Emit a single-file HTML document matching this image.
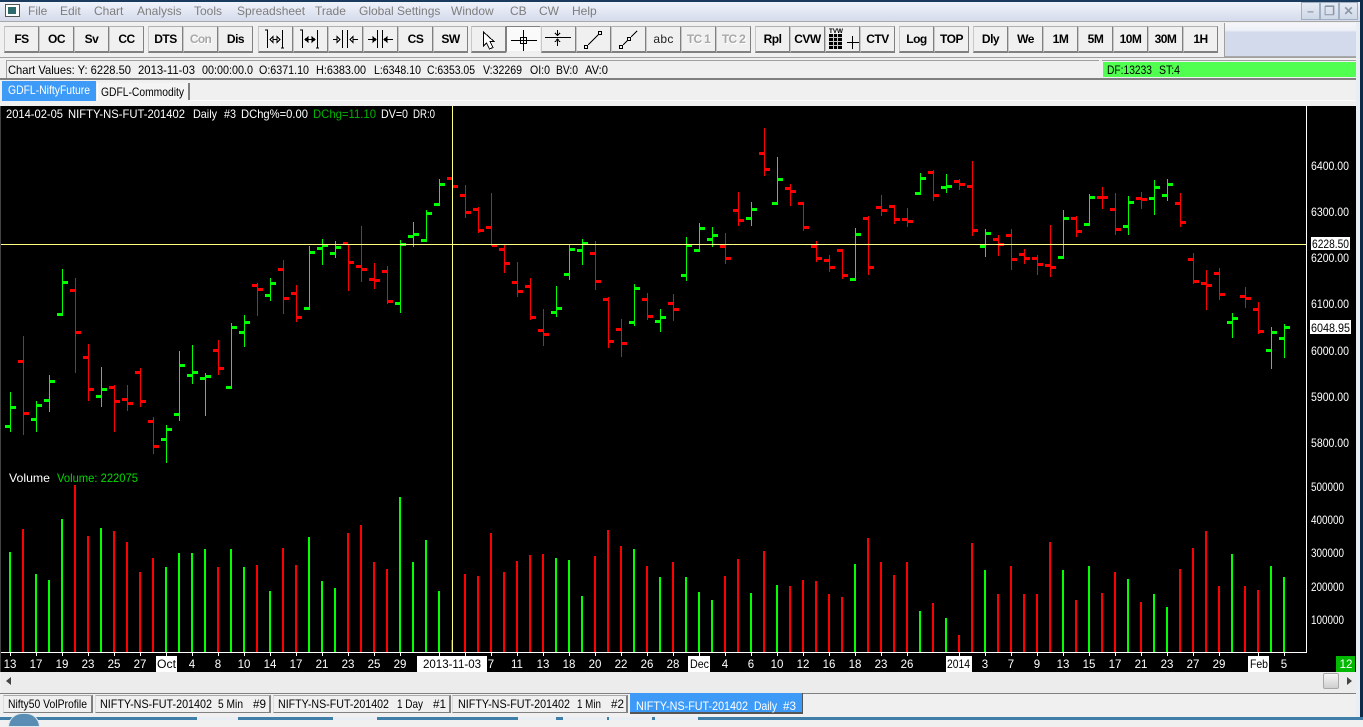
<!DOCTYPE html>
<html><head><meta charset="utf-8"><style>
html,body{margin:0;padding:0;width:1363px;height:720px;overflow:hidden;background:#f0f0f0;font-family:"Liberation Sans",sans-serif;font-size:12px;color:#000}
.a{position:absolute}
.menu{position:absolute;left:0;top:2px;width:1363px;height:19px;background:linear-gradient(#f0f3fa,#d5dbec)}
.menu span{position:absolute;top:2px;color:#7d7d7d;font-size:12px;white-space:pre}
.b{position:absolute;top:26px;width:33px;height:24px;background:#f0f0f0;border-top:1px solid #b0b0b0;border-left:1px solid #c8c8c8;border-right:1px solid #808080;border-bottom:2px solid #808080;text-align:center;font-weight:bold;font-size:12px;line-height:24px;letter-spacing:-.5px}
.d{color:#a8a8a8;text-shadow:1px 1px 0 #fff;letter-spacing:-.7px}
.t{position:absolute;top:695px;height:16px;background:#f0f0f0;border-top:1px solid #aaa;border-left:1px solid #ddd;border-right:2px solid #808080;border-bottom:1px solid #808080}
.wc{position:absolute;top:2px;height:16px;width:17px;border:1px solid #9fb0c4;background:linear-gradient(#e6ebf4,#cfd8e8);color:#8a97a8;text-align:center;font-size:12px;line-height:16px;font-weight:bold}
text{font-family:"Liberation Sans",sans-serif;font-size:12px;white-space:pre}
</style></head><body>
<div class="a" style="left:0;top:0;width:1363px;height:2px;background:#1a3b5e"></div>
<div class="menu">
<span style="left:28px">File</span><span style="left:60px">Edit</span><span style="left:94px">Chart</span><span style="left:137px">Analysis</span><span style="left:194px">Tools</span><span style="left:237px">Spreadsheet</span><span style="left:315px">Trade</span><span style="left:359px">Global Settings</span><span style="left:451px">Window</span><span style="left:510px">CB</span><span style="left:539px">CW</span><span style="left:572px">Help</span>
</div>
<div class="a" style="left:5px;top:4px;width:13px;height:11px;background:#fff;border:1px solid #555"><div style="width:8px;height:7px;margin:2px;background:#2c6a6e"></div></div>
<div class="wc" style="left:1301px">&#8211;</div><div class="wc" style="left:1320px">&#10064;</div><div class="wc" style="left:1339px">&#10005;</div>
<div class="a" style="left:0;top:21px;width:1363px;height:1px;background:#a8a8a8"></div>

<div class="b" style="left:4px">FS</div><div class="b" style="left:39px">OC</div><div class="b" style="left:74px">Sv</div><div class="b" style="left:109px">CC</div>
<div class="b" style="left:148px">DTS</div><div class="b d" style="left:183px">Con</div><div class="b" style="left:218px">Dis</div>
<div class="b" style="left:258px"></div><div class="b" style="left:293px"></div><div class="b" style="left:328px"></div><div class="b" style="left:363px"></div>
<div class="b" style="left:398px">CS</div><div class="b" style="left:433px">SW</div>
<div class="b" style="left:471px"></div><div class="b" style="left:506px;background:#fafafa;border-top-color:#808080;border-left-color:#808080;border-right-color:#eee;border-bottom-color:#eee"></div><div class="b" style="left:541px"></div><div class="b" style="left:576px"></div><div class="b" style="left:611px"></div>
<div class="b" style="left:646px;font-weight:normal;color:#222;font-size:12px;letter-spacing:.3px">abc</div><div class="b d" style="left:681px">TC 1</div><div class="b d" style="left:716px">TC 2</div>
<div class="b" style="left:755px">Rpl</div><div class="b" style="left:790px">CVW</div><div class="b" style="left:825px"></div><div class="b" style="left:860px">CTV</div>
<div class="b" style="left:899px">Log</div><div class="b" style="left:934px">TOP</div>
<div class="b" style="left:973px">Dly</div><div class="b" style="left:1008px">We</div><div class="b" style="left:1043px">1M</div><div class="b" style="left:1078px">5M</div><div class="b" style="left:1113px">10M</div><div class="b" style="left:1148px">30M</div><div class="b" style="left:1183px">1H</div>

<div class="a" style="left:1224px;top:23px;width:1px;height:34px;background:#a0a0a0"></div>
<div class="a" style="left:1225px;top:23px;width:133px;height:33px;background:linear-gradient(#f4f6fb 0,#eef0f7 22%,#d3daec 28%,#d3daec 100%);border-bottom:1px solid #a8a8a8"></div>
<div class="a" style="left:0;top:57px;width:1357px;height:1px;background:#a0a0a0"></div>

<div class="a" style="left:6px;top:60px;width:1093px;height:1px;background:#a0a0a0"></div>
<div class="a" style="left:6px;top:60px;width:1px;height:18px;background:#a0a0a0"></div>
<div class="a" style="left:1103px;top:62px;width:254px;height:15px;background:#50ff50"></div>
<div class="a" style="left:1102px;top:60px;width:255px;height:1px;background:#a0a0a0"></div>
<div class="a" style="left:0;top:78px;width:1356px;height:2px;background:#808080"></div>

<div class="a" style="left:2px;top:81px;width:94px;height:20px;background:#3d9bf7"></div>
<div class="a" style="left:97px;top:83px;width:90px;height:17px;background:#f4f4f4;border-left:1px solid #fff;border-right:2px solid #808080"></div>
<div class="a" style="left:190px;top:100px;width:1166px;height:1px;background:#fbfbfb"></div>

<div class="a" style="left:1px;top:106px;width:1355px;height:566px;background:#000"></div>
<div class="a" style="left:0;top:106px;width:1px;height:566px;background:#444"></div>
<div class="a" style="left:1356px;top:22px;width:4px;height:695px;background:#e8eef4"></div>
<div class="a" style="left:1360px;top:0;width:3px;height:720px;background:#0d2a48"></div>

<svg class="a" style="left:0;top:0" width="1363" height="720" shape-rendering="crispEdges">
<path fill="none" stroke="#0f0" stroke-width="2" d="M10 552V652M36 574V652M49 580V652M62 519V652M101 528V652M166 567V652M179 553V652M192 553V652M205 549V652M231 549V652M244 567V652M270 591V652M309 537V652M322 581V652M335 588V652M400 497V652M413 562V652M426 540V652M439 591V652M556 558V652M569 560V652M582 596V652M634 549V652M660 577V652M686 577V652M699 592V652M712 600V652M751 593V652M777 585V652M855 564V652M920 611V652M946 618V652M985 570V652M1063 570V652M1089 566V652M1128 579V652M1154 594V652M1167 607V652M1232 554V652M1271 566V652M1284 577V652"/>
<path fill="none" stroke="#f00" stroke-width="2" d="M23 529V652M75 485V652M88 536V652M114 531V652M127 542V652M140 572V652M153 558V652M218 567V652M257 565V652M283 548V652M296 565V652M348 533V652M361 525V652M374 562V652M387 569V652M452 640V652M465 574V652M478 576V652M491 533V652M504 572V652M517 561V652M530 555V652M543 554V652M595 556V652M608 530V652M621 546V652M647 566V652M673 562V652M725 576V652M738 559V652M764 551V652M790 586V652M803 580V652M816 581V652M829 594V652M842 597V652M868 538V652M881 562V652M894 575V652M907 562V652M933 603V652M959 635V652M972 543V652M998 594V652M1011 566V652M1024 594V652M1037 594V652M1050 542V652M1076 600V652M1102 593V652M1115 572V652M1141 602V652M1180 569V652M1193 548V652M1206 531V652M1219 586V652M1245 586V652M1258 590V652"/>
<path fill="none" stroke="#0f0" stroke-width="1" d="M10.5 392V432M36.5 401V432M49.5 375V412M62.5 269V316M101.5 367V407M166.5 425V463M179.5 351V421M192.5 345V384M205.5 373V416M231.5 323V389M244.5 315V347M270.5 278V301M309.5 246V310M322.5 239V265M335.5 241V258M400.5 240V313M413.5 222V247M426.5 210V242M439.5 179V206M556.5 286V317M569.5 244V280M582.5 239V265M634.5 284V326M660.5 309V332M686.5 237V281M699.5 223V252M712.5 227V247M751.5 202V226M777.5 157V205M855.5 228V281M920.5 173V195M946.5 174V193M985.5 229V257M1063.5 210V259M1089.5 194V226M1128.5 196V235M1154.5 180V215M1167.5 179V201M1232.5 313V338M1271.5 327V369M1284.5 324V358"/>
<path fill="none" stroke="#0f0" stroke-width="3" d="M5 426.5h5M11 407.5h5M31 419.5h5M37 405.5h5M44 400.5h5M50 381.5h5M57 314.5h5M63 282.5h5M96 396.5h5M102 389.5h5M161 439.5h5M167 429.5h5M174 414.5h5M180 365.5h5M187 375.5h5M193 372.5h5M200 378.5h5M206 376.5h5M226 387.5h5M232 327.5h5M239 332.5h5M245 322.5h5M265 295.5h5M271 283.5h5M304 308.5h5M310 252.5h5M317 248.5h5M323 245.5h5M330 253.5h5M336 247.5h5M395 303.5h5M401 244.5h5M408 236.5h5M414 234.5h5M421 240.5h5M427 213.5h5M434 204.5h5M440 184.5h5M551 312.5h5M557 308.5h5M564 274.5h5M570 249.5h5M577 250.5h5M583 243.5h5M629 322.5h5M635 288.5h5M655 321.5h5M661 317.5h5M681 275.5h5M687 245.5h5M694 250.5h5M700 228.5h5M707 239.5h5M713 235.5h5M746 218.5h5M752 209.5h5M772 203.5h5M778 179.5h5M850 279.5h5M856 234.5h5M915 193.5h5M921 178.5h5M941 187.5h5M947 186.5h5M980 246.5h5M986 233.5h5M1058 257.5h5M1064 218.5h5M1084 224.5h5M1090 197.5h5M1123 226.5h5M1129 202.5h5M1149 198.5h5M1155 187.5h5M1162 195.5h5M1168 184.5h5M1227 322.5h5M1233 318.5h5M1266 350.5h5M1272 332.5h5M1279 338.5h5M1285 327.5h5"/>
<path fill="none" stroke="#f00" stroke-width="1" d="M23.5 336V435M75.5 278V373M88.5 344V401M114.5 385V432M127.5 385V411M140.5 368V407M153.5 417V454M218.5 340V375M257.5 283V316M283.5 260V314M296.5 285V322M348.5 244V291M361.5 226V282M374.5 263V289M387.5 266V304M452.5 173V189M465.5 185V218M478.5 207V233M491.5 193V246M504.5 245V273M517.5 262V297M530.5 278V320M543.5 309V346M595.5 241V290M608.5 297V348M621.5 319V357M647.5 293V320M673.5 294V321M725.5 233V264M738.5 192V226M764.5 128V176M790.5 184V206M803.5 202V231M816.5 241V262M829.5 255V272M842.5 249V279M868.5 216V275M881.5 195V216M894.5 205V224M907.5 208V227M933.5 170V201M959.5 179V190M972.5 161V236M998.5 235V256M1011.5 229V270M1024.5 249V264M1037.5 255V275M1050.5 225V277M1076.5 216V237M1102.5 187V209M1115.5 193V235M1141.5 192V209M1180.5 193V227M1193.5 253V284M1206.5 270V310M1219.5 268V300M1245.5 287V308M1258.5 302V334"/>
<path fill="none" stroke="#f00" stroke-width="3" d="M18 361.5h5M24 413.5h5M70 290.5h5M76 332.5h5M83 357.5h5M89 389.5h5M109 387.5h5M115 401.5h5M122 399.5h5M128 403.5h5M135 372.5h5M141 401.5h5M148 421.5h5M154 446.5h5M213 350.5h5M219 368.5h5M252 285.5h5M258 289.5h5M278 269.5h5M284 298.5h5M291 293.5h5M297 317.5h5M343 243.5h5M349 262.5h5M356 266.5h5M362 269.5h5M369 279.5h5M375 280.5h5M382 271.5h5M388 301.5h5M447 178.5h5M453 186.5h5M460 195.5h5M466 212.5h5M473 209.5h5M479 230.5h5M486 227.5h5M492 245.5h5M499 249.5h5M505 263.5h5M512 282.5h5M518 291.5h5M525 286.5h5M531 317.5h5M538 330.5h5M544 334.5h5M590 253.5h5M596 281.5h5M603 299.5h5M609 341.5h5M616 329.5h5M622 343.5h5M642 299.5h5M648 316.5h5M668 303.5h5M674 309.5h5M720 246.5h5M726 258.5h5M733 210.5h5M739 220.5h5M759 153.5h5M765 169.5h5M785 188.5h5M791 191.5h5M798 203.5h5M804 227.5h5M811 246.5h5M817 258.5h5M824 260.5h5M830 267.5h5M837 250.5h5M843 275.5h5M863 218.5h5M869 267.5h5M876 207.5h5M882 210.5h5M889 206.5h5M895 219.5h5M902 219.5h5M908 221.5h5M928 172.5h5M934 195.5h5M954 181.5h5M960 184.5h5M967 186.5h5M973 230.5h5M993 239.5h5M999 244.5h5M1006 235.5h5M1012 259.5h5M1019 254.5h5M1025 258.5h5M1032 258.5h5M1038 264.5h5M1045 265.5h5M1051 267.5h5M1071 218.5h5M1077 231.5h5M1097 197.5h5M1103 197.5h5M1110 209.5h5M1116 229.5h5M1136 198.5h5M1142 199.5h5M1175 203.5h5M1181 222.5h5M1188 259.5h5M1194 281.5h5M1201 283.5h5M1207 285.5h5M1214 273.5h5M1220 294.5h5M1240 296.5h5M1246 298.5h5M1253 309.5h5M1259 331.5h5"/>
<rect x="1" y="244" width="1305" height="1" fill="#ffff80"/>
<rect x="452" y="106" width="1" height="546" fill="#ffff80"/>
<rect x="1306" y="106" width="1" height="547" fill="#fff"/>
<rect x="1" y="652" width="1305" height="1" fill="#fff"/>
<path fill="none" stroke="#fff" d="M10.5 653v3M36.5 653v3M62.5 653v3M88.5 653v3M114.5 653v3M140.5 653v3M166.5 653v3M192.5 653v3M218.5 653v3M244.5 653v3M270.5 653v3M296.5 653v3M322.5 653v3M348.5 653v3M374.5 653v3M400.5 653v3M439.5 653v3M465.5 653v3M491.5 653v3M517.5 653v3M543.5 653v3M569.5 653v3M595.5 653v3M621.5 653v3M647.5 653v3M673.5 653v3M699.5 653v3M725.5 653v3M751.5 653v3M777.5 653v3M803.5 653v3M829.5 653v3M855.5 653v3M881.5 653v3M907.5 653v3M959.5 653v3M985.5 653v3M1011.5 653v3M1037.5 653v3M1063.5 653v3M1089.5 653v3M1115.5 653v3M1141.5 653v3M1167.5 653v3M1193.5 653v3M1219.5 653v3M1258.5 653v3M1284.5 653v3"/>
<rect x="156" y="656" width="21" height="16" fill="#fff"/><rect x="417" y="656" width="70" height="16" fill="#fff"/><rect x="688" y="656" width="22" height="16" fill="#fff"/><rect x="946" y="656" width="26" height="16" fill="#fff"/><rect x="1248" y="656" width="21" height="16" fill="#fff"/><rect x="1336" y="656" width="19" height="16" fill="#00b800"/>
<rect x="1311" y="237" width="39" height="13" fill="#fff"/><rect x="1310" y="320" width="41" height="14" fill="#fff"/>

<g fill="none" stroke="#000" stroke-width="1">
<path d="M267.5 30v18M265 30h3M282.5 30v18M281 48h3M270 39.5h10"/><path d="M270 39.5l3-3v6zM280 39.5l-3-3v6z" fill="#f0f0f0"/>
<path d="M302.5 30v18M300 30h3M317.5 30v18M316 48h3M305 39.5h10"/><path d="M305 39.500l3-2.500v5zM315 39.500l-3-2.500v5z" fill="#000"/>
<path d="M342.500 30v18M347.500 30v18M333 39.500h7M358 39.500h-8"/><path d="M340 39.500l-3-3v6zM350 39.500l3-3v6z" fill="#f0f0f0"/>
<path d="M377.500 30v18M382.500 30v18M368 39.500h8M393 39.500h-9"/><path d="M376 39.500l-3-2.500v5zM384 39.500l3-2.500v5z" fill="#000"/>
<path d="M483.500 32v14l3-3 3 6 3.500-1.500-3-6h4z" fill="#fff"/>
<path d="M511 40.500h26M523.500 30v21" stroke-width="1"/><rect x="520.500" y="37.500" width="6" height="6"/>
<path d="M545 37.500h26M557.500 30v5M557.500 39v7M555 33l2.500 2.500 2.500-2.500M555 42l2.500-3 2.500 3"/>
<rect x="584.500" y="45.500" width="3" height="3"/><rect x="598.500" y="31.500" width="3" height="3"/><path d="M588 45l11-11"/>
<rect x="619.500" y="45.500" width="3" height="3"/><rect x="627.500" y="37.500" width="3" height="3"/><path d="M623 45l4-4M631 37l6-6"/>
<path d="M847 42.500h12M852.500 36v13"/>
</g>
<rect x="829" y="34" width="13" height="15" fill="#000"/>
<path d="M829 37.500h13M829 41.500h13M829 45.500h13M833.500 34v15M837.500 34v15" stroke="#ccc" fill="none"/>
</svg>

<div class="a" style="left:1px;top:672px;width:1355px;height:21px;background:#ececec"></div>
<div class="a" style="left:0;top:693px;width:1356px;height:1px;background:#808080"></div>
<div class="a" style="left:6px;top:677px;width:0;height:0;border:4px solid transparent;border-right:5px solid #444;border-left:0"></div>
<div class="a" style="left:1347px;top:677px;width:0;height:0;border:4px solid transparent;border-left:5px solid #444;border-right:0"></div>
<div class="a" style="left:1323px;top:673px;width:14px;height:14px;background:linear-gradient(#f6f6f6,#cfcfcf);border:1px solid #a8a8a8;border-radius:2px"></div>

<div class="t" style="left:3px;width:87px"></div>
<div class="t" style="left:95px;width:173px"></div>
<div class="t" style="left:273px;width:175px"></div>
<div class="t" style="left:452px;width:173px"></div>
<div class="a" style="left:630px;top:693px;width:172px;height:19px;background:#3d9bf7;border-right:1px solid #555;border-bottom:2px solid #555"></div>

<div class="a" style="left:0;top:717px;width:1363px;height:3px;background:#3f7ea8"></div>
<div class="a" style="left:8px;top:713px;width:32px;height:14px;border-radius:16px 16px 0 0;background:#5a8db4;border:1px solid #dfe8ef;box-sizing:border-box"></div>
<div class="a" style="left:197px;top:717px;width:41px;height:3px;background:#e8eef4"></div><div class="a" style="left:333px;top:717px;width:44px;height:3px;background:#e8eef4"></div><div class="a" style="left:518px;top:717px;width:38px;height:3px;background:#e8eef4"></div><div class="a" style="left:563px;top:717px;width:44px;height:3px;background:#e8eef4"></div><div class="a" style="left:609px;top:717px;width:43px;height:3px;background:#e8eef4"></div><div class="a" style="left:655px;top:717px;width:43px;height:3px;background:#e8eef4"></div>

<svg class="a" style="left:0;top:0" width="1363" height="720" lengthAdjust="spacingAndGlyphs">
<g>
<text x="829" y="33" style="font-size:6px;font-weight:bold" textLength="14" lengthAdjust="spacingAndGlyphs">TVW</text>

<text x="8" y="74" textLength="123" lengthAdjust="spacingAndGlyphs">Chart Values: Y: 6228.50</text>
<text x="138" y="74" textLength="57" lengthAdjust="spacingAndGlyphs">2013-11-03</text>
<text x="202" y="74" textLength="51" lengthAdjust="spacingAndGlyphs">00:00:00.0</text>
<text x="259" y="74" textLength="50" lengthAdjust="spacingAndGlyphs">O:6371.10</text>
<text x="316" y="74" textLength="50" lengthAdjust="spacingAndGlyphs">H:6383.00</text>
<text x="374" y="74" textLength="47" lengthAdjust="spacingAndGlyphs">L:6348.10</text>
<text x="427" y="74" textLength="48" lengthAdjust="spacingAndGlyphs">C:6353.05</text>
<text x="483" y="74" textLength="39" lengthAdjust="spacingAndGlyphs">V:32269</text>
<text x="530" y="74" textLength="20" lengthAdjust="spacingAndGlyphs">OI:0</text>
<text x="556" y="74" textLength="22" lengthAdjust="spacingAndGlyphs">BV:0</text>
<text x="585" y="74" textLength="23" lengthAdjust="spacingAndGlyphs">AV:0</text>
<text x="1107" y="74" textLength="45" lengthAdjust="spacingAndGlyphs">DF:13233</text>
<text x="1159" y="74" textLength="21" lengthAdjust="spacingAndGlyphs">ST:4</text>

<text x="8" y="94" fill="#fff" textLength="82" lengthAdjust="spacingAndGlyphs">GDFL-NiftyFuture</text>
<text x="101" y="96" textLength="83" lengthAdjust="spacingAndGlyphs">GDFL-Commodity</text>

<g fill="#fff">
<text x="6" y="118" textLength="57" lengthAdjust="spacingAndGlyphs">2014-02-05</text>
<text x="68" y="118" textLength="117" lengthAdjust="spacingAndGlyphs">NIFTY-NS-FUT-201402</text>
<text x="193" y="118" textLength="24" lengthAdjust="spacingAndGlyphs">Daily</text>
<text x="224" y="118" textLength="12" lengthAdjust="spacingAndGlyphs">#3</text>
<text x="241" y="118" textLength="67" lengthAdjust="spacingAndGlyphs">DChg%=0.00</text>
<text x="313" y="118" textLength="63" lengthAdjust="spacingAndGlyphs" fill="#00b400">DChg=11.10</text>
<text x="381" y="118" textLength="27" lengthAdjust="spacingAndGlyphs">DV=0</text>
<text x="413" y="118" textLength="22" lengthAdjust="spacingAndGlyphs">DR:0</text>
<text x="9" y="482" textLength="41" lengthAdjust="spacingAndGlyphs">Volume</text>
</g>
<text x="57" y="482" fill="#00d800" textLength="81" lengthAdjust="spacingAndGlyphs">Volume: 222075</text>

<g fill="#fff">
<text x="1311" y="170" textLength="38" lengthAdjust="spacingAndGlyphs">6400.00</text><text x="1311" y="216" textLength="38" lengthAdjust="spacingAndGlyphs">6300.00</text><text x="1311" y="262" textLength="38" lengthAdjust="spacingAndGlyphs">6200.00</text><text x="1311" y="308" textLength="38" lengthAdjust="spacingAndGlyphs">6100.00</text><text x="1311" y="355" textLength="38" lengthAdjust="spacingAndGlyphs">6000.00</text><text x="1311" y="401" textLength="38" lengthAdjust="spacingAndGlyphs">5900.00</text><text x="1311" y="447" textLength="38" lengthAdjust="spacingAndGlyphs">5800.00</text>
<text x="1311" y="491" textLength="33" lengthAdjust="spacingAndGlyphs">500000</text><text x="1311" y="524" textLength="33" lengthAdjust="spacingAndGlyphs">400000</text><text x="1311" y="557" textLength="33" lengthAdjust="spacingAndGlyphs">300000</text><text x="1311" y="591" textLength="33" lengthAdjust="spacingAndGlyphs">200000</text><text x="1311" y="624" textLength="33" lengthAdjust="spacingAndGlyphs">100000</text>
</g>
<text x="1312" y="248" textLength="37" lengthAdjust="spacingAndGlyphs">6228.50</text><text x="1311" y="332" textLength="39" lengthAdjust="spacingAndGlyphs">6048.95</text>

<g fill="#fff" text-anchor="middle" style="font-size:11.5px">
<text x="10" y="668" style="font-size:11.5px">13</text><text x="36" y="668" style="font-size:11.5px">17</text><text x="62" y="668" style="font-size:11.5px">19</text><text x="88" y="668" style="font-size:11.5px">23</text><text x="114" y="668" style="font-size:11.5px">25</text><text x="140" y="668" style="font-size:11.5px">27</text><text x="192" y="668" style="font-size:11.5px">4</text><text x="218" y="668" style="font-size:11.5px">8</text><text x="244" y="668" style="font-size:11.5px">10</text><text x="270" y="668" style="font-size:11.5px">14</text><text x="296" y="668" style="font-size:11.5px">17</text><text x="322" y="668" style="font-size:11.5px">21</text><text x="348" y="668" style="font-size:11.5px">23</text><text x="374" y="668" style="font-size:11.5px">25</text><text x="400" y="668" style="font-size:11.5px">29</text><text x="491" y="668" style="font-size:11.5px">7</text><text x="517" y="668" style="font-size:11.5px">11</text><text x="543" y="668" style="font-size:11.5px">13</text><text x="569" y="668" style="font-size:11.5px">18</text><text x="595" y="668" style="font-size:11.5px">20</text><text x="621" y="668" style="font-size:11.5px">22</text><text x="647" y="668" style="font-size:11.5px">26</text><text x="673" y="668" style="font-size:11.5px">28</text><text x="725" y="668" style="font-size:11.5px">4</text><text x="751" y="668" style="font-size:11.5px">6</text><text x="777" y="668" style="font-size:11.5px">10</text><text x="803" y="668" style="font-size:11.5px">12</text><text x="829" y="668" style="font-size:11.5px">16</text><text x="855" y="668" style="font-size:11.5px">18</text><text x="881" y="668" style="font-size:11.5px">23</text><text x="907" y="668" style="font-size:11.5px">26</text><text x="985" y="668" style="font-size:11.5px">3</text><text x="1011" y="668" style="font-size:11.5px">7</text><text x="1037" y="668" style="font-size:11.5px">9</text><text x="1063" y="668" style="font-size:11.5px">13</text><text x="1089" y="668" style="font-size:11.5px">15</text><text x="1115" y="668" style="font-size:11.5px">17</text><text x="1141" y="668" style="font-size:11.5px">21</text><text x="1167" y="668" style="font-size:11.5px">23</text><text x="1193" y="668" style="font-size:11.5px">27</text><text x="1219" y="668" style="font-size:11.5px">29</text><text x="1284" y="668" style="font-size:11.5px">5</text><text x="1346" y="668" style="font-size:11.5px">12</text>
</g>
<text x="157" y="668" textLength="19" lengthAdjust="spacingAndGlyphs">Oct</text><text x="423" y="668" textLength="58" lengthAdjust="spacingAndGlyphs">2013-11-03</text><text x="690" y="668" textLength="19" lengthAdjust="spacingAndGlyphs">Dec</text><text x="947" y="668" textLength="23" lengthAdjust="spacingAndGlyphs">2014</text><text x="1250" y="668" textLength="18" lengthAdjust="spacingAndGlyphs">Feb</text>

<text x="8" y="708" textLength="79" lengthAdjust="spacingAndGlyphs">Nifty50 VolProfile</text>
<text x="100" y="708" textLength="112" lengthAdjust="spacingAndGlyphs">NIFTY-NS-FUT-201402</text><text x="218" y="708" textLength="25" lengthAdjust="spacingAndGlyphs">5 Min</text><text x="253" y="708" textLength="13" lengthAdjust="spacingAndGlyphs">#9</text>
<text x="278" y="708" textLength="111" lengthAdjust="spacingAndGlyphs">NIFTY-NS-FUT-201402</text><text x="397" y="708" textLength="26" lengthAdjust="spacingAndGlyphs">1 Day</text><text x="433" y="708" textLength="13" lengthAdjust="spacingAndGlyphs">#1</text>
<text x="458" y="708" textLength="112" lengthAdjust="spacingAndGlyphs">NIFTY-NS-FUT-201402</text><text x="577" y="708" textLength="24" lengthAdjust="spacingAndGlyphs">1 Min</text><text x="611" y="708" textLength="13" lengthAdjust="spacingAndGlyphs">#2</text>
<g fill="#fff">
<text x="636" y="710" textLength="112" lengthAdjust="spacingAndGlyphs">NIFTY-NS-FUT-201402</text><text x="754" y="710" textLength="23" lengthAdjust="spacingAndGlyphs">Daily</text><text x="783" y="710" textLength="13" lengthAdjust="spacingAndGlyphs">#3</text>
</g>
</g>
</svg>
</body></html>
